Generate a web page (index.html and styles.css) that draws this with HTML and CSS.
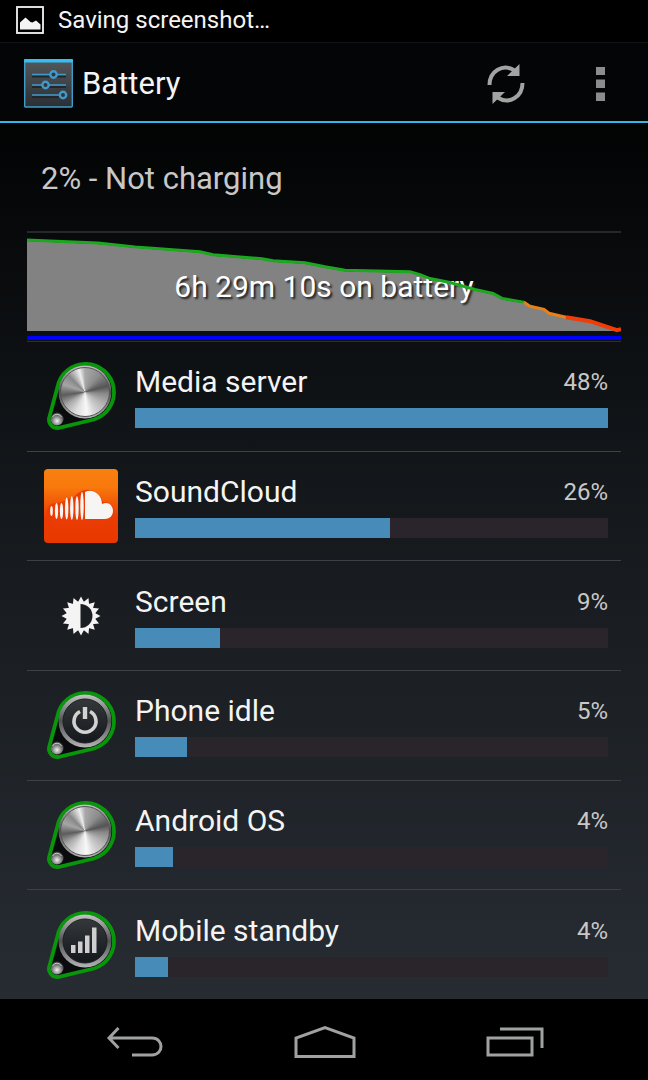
FILE: index.html
```html
<!DOCTYPE html>
<html lang="en">

<head>
    <meta charset="UTF-8">
    <meta name="viewport" content="width=device-width, initial-scale=1.0">
    <title>Battery</title>
    <link rel="stylesheet" href="styles.css">
</head>

<body>
    <!-- shared shapes for the round icons -->
    <svg class="defs" width="0" height="0" aria-hidden="true">
        <defs>
            <linearGradient id="ring" x1="0" y1="0" x2="0" y2="1">
                <stop offset="0" stop-color="#c4c4c4" />
                <stop offset="0.5" stop-color="#505254" />
                <stop offset="1" stop-color="#b4b4b4" />
            </linearGradient>
            <linearGradient id="face" x1="0" y1="0" x2="0" y2="1">
                <stop offset="0" stop-color="#35383b" />
                <stop offset="1" stop-color="#14171b" />
            </linearGradient>
            <radialGradient id="stud" cx="0.5" cy="0.65" r="0.6">
                <stop offset="0" stop-color="#f2f2f2" />
                <stop offset="0.5" stop-color="#929292" />
                <stop offset="1" stop-color="#3c3c3c" />
            </radialGradient>
            <linearGradient id="tile" x1="0" y1="0" x2="0" y2="1">
                <stop offset="0" stop-color="#f9800e" />
                <stop offset="0.25" stop-color="#f8780c" />
                <stop offset="0.65" stop-color="#ea3c04" />
                <stop offset="1" stop-color="#e83800" />
            </linearGradient>
            <linearGradient id="panel" x1="0" y1="0" x2="0" y2="1">
                <stop offset="0" stop-color="#55585a" />
                <stop offset="1" stop-color="#292f35" />
            </linearGradient>
            <symbol id="case" viewBox="0 0 74 74">
                <path d="M13.5 28A28.500 28.500 0 1 1 50 60.5L14 69A8.5 8.5 0 0 1 5 59.5Z" fill="#090b0c" stroke="#08960b" stroke-width="3.800" />
                <circle cx="41" cy="33" r="26.500" fill="url(#ring)" />
                <circle cx="13" cy="60" r="6.500" fill="url(#stud)" />
                <path d="M8.500 58a5 5 0 0 1 9 0" fill="none" stroke="#ccc" stroke-width="1" />
            </symbol>
        </defs>
    </svg>

    <div class="status-bar">
        <svg class="status-icon" viewBox="0 0 28 28" aria-hidden="true">
            <rect x="1" y="1" width="26" height="26" fill="none" stroke="#f4f4f4" stroke-width="1.8" />
            <path d="M4 23.500v-7l5.500-5 5 4.500 2 .5 3.500-2 4.500 4v5z" fill="#f4f4f4" />
        </svg>
        <span>Saving screenshot…</span>
    </div>

    <header class="action-bar">
        <svg class="settings-icon" viewBox="0 0 49 49" aria-hidden="true">
            <rect x="0.7" y="1" width="47.600" height="47" rx="1" fill="url(#panel)" stroke="#3f9cca" stroke-width="1.4" />
            <rect x="0" y="0" width="49" height="3.500" rx="1" fill="#38bdf0" />
            <path d="M8 17.500h34M8 28h34M8 38h34" stroke="#22272b" stroke-width="2" />
            <path d="M8 15.500h18M33 15.500h9M8 26h10M25 26h17M8 36h27" stroke="#4399c9" stroke-width="1.700" />
            <g fill="#30373c" stroke="#4399c9" stroke-width="2.400">
                <circle cx="29.500" cy="15.500" r="3.200" />
                <circle cx="21.500" cy="26" r="3.200" />
                <circle cx="39" cy="36" r="3.200" />
            </g>
        </svg>
        <h1 class="title">Battery</h1>
        <button class="action" type="button" aria-label="Refresh">
            <svg width="40" height="42" viewBox="0 0 40 42" fill="none" stroke="#a3a3a3" stroke-width="4">
                <path d="M3.500 22C3.500 8 17 0 28.500 7.500" />
                <path d="M36.500 20C36.500 34 23 42 11.500 34.500" />
                <path d="M33.500 1v12H21z M6.500 41V29H19z" fill="#a3a3a3" stroke="none" />
            </svg>
        </button>
        <button class="action" type="button" aria-label="More options">
            <svg width="9" height="34" viewBox="0 0 9 34" fill="#8c8c8c">
                <path d="M0 0h9v8H0zM0 12.500h9v8.500H0zM0 25.500h9v8.500H0z" />
            </svg>
        </button>
    </header>

    <main class="content">
        <p class="summary">2% - Not charging</p>

        <div class="chart">
            <svg class="layer" viewBox="0 0 594 109" preserveAspectRatio="none" aria-hidden="true">
                <path fill="#828282" d="M0 8L23 9 71 11 108 15 173 20 186 23 235 27 246 29 278 31 298 35 318 38.500 383 40 393 43 403 47 423 51 448 58 466 62 475 67 498 71 503 74 517 77 522 81 539 85 563 89 590 98V99H0z" />
                <path fill="#0000ff" d="M0 104h594v4H0z" />
            </svg>
            <p class="chart-label">6h 29m 10s on battery</p>
            <svg class="layer" viewBox="0 0 594 109" preserveAspectRatio="none" fill="none" stroke-width="3" aria-hidden="true">
                <path stroke="#1ca81f" d="M0 7L23 8 71 10 108 14 173 19 186 22 235 26 246 28 278 30 298 34 318 37.500 383 39 393 42 403 46 423 50 448 57 466 61 475 66 498 70" />
                <path stroke="#e8801a" d="M497 70l6 4 14 3 5 4 17 4" />
                <path stroke="#f03c06" stroke-width="4" d="M539 85l24 4 27 9 4-1" />
            </svg>
        </div>

        <ul class="usage">
            <li class="item">
                <svg class="icon" viewBox="0 0 74 74" aria-hidden="true">
                    <use href="#case" />
                    <foreignObject x="16" y="8" width="50" height="50">
                        <div class="disc"></div>
                    </foreignObject>
                </svg>
                <div class="info">
                    <span class="name">Media server</span>
                    <span class="percent">48%</span>
                    <div class="bar"><div class="fill" style="width: 100%"></div></div>
                </div>
            </li>
            <li class="item">
                <svg class="icon" viewBox="0 0 74 74" aria-hidden="true">
                    <rect width="74" height="74" rx="4" fill="url(#tile)" />
                    <path d="M3 43c0-6 4-9 10-9 6 0 11-5 17-6 7-9 22-12 29 5 10 0 12 8 11 12-1 8-8 10-12 10H12c-6 0-9-5-9-12z" fill="#ea3d05" />
                    <path d="M41 50V23c8-4 17 3 17 12 7-3 11 2 11 7s-4 8-8 8z" fill="#f7f5f3" />
                    <g fill="#f7f5f3">
                        <ellipse cx="7.500" cy="42" rx="1.300" ry="5" />
                        <ellipse cx="12.500" cy="42" rx="1.600" ry="8" />
                        <ellipse cx="17.500" cy="42" rx="1.600" ry="8" />
                        <ellipse cx="22.700" cy="39.500" rx="1.700" ry="11" />
                        <ellipse cx="27.800" cy="39" rx="1.700" ry="12" />
                        <ellipse cx="33" cy="39" rx="1.700" ry="12" />
                        <ellipse cx="38" cy="37" rx="1.700" ry="14" />
                    </g>
                </svg>
                <div class="info">
                    <span class="name">SoundCloud</span>
                    <span class="percent">26%</span>
                    <div class="bar"><div class="fill" style="width: 54%"></div></div>
                </div>
            </li>
            <li class="item">
                <svg class="icon" viewBox="0 0 74 74" aria-hidden="true">
                    <g transform="translate(37 37)" fill="#f4f4f4">
                        <circle r="14.500" />
                        <path id="ray" d="M-3.500-13L0-19.500 3.500-13zM-3.500 13L0 19.500 3.500 13z" />
                        <use href="#ray" transform="rotate(22.5)" />
                        <use href="#ray" transform="rotate(45)" />
                        <use href="#ray" transform="rotate(67.5)" />
                        <use href="#ray" transform="rotate(90)" />
                        <use href="#ray" transform="rotate(112.5)" />
                        <use href="#ray" transform="rotate(135)" />
                        <use href="#ray" transform="rotate(157.5)" />
                        <path d="M-.5-12A12 12 0 0 1-.5 12z" fill="#1a1e22" />
                    </g>
                </svg>
                <div class="info">
                    <span class="name">Screen</span>
                    <span class="percent">9%</span>
                    <div class="bar"><div class="fill" style="width: 18%"></div></div>
                </div>
            </li>
            <li class="item">
                <svg class="icon" viewBox="0 0 74 74" aria-hidden="true">
                    <use href="#case" />
                    <circle cx="41" cy="33" r="22" fill="url(#face)" stroke="#1b1e21" stroke-width="1" />
                    <path d="M36 23.500a11 11 0 1 0 10 0" fill="none" stroke="#d2d2d2" stroke-width="3.600" />
                    <path d="M41 19v12" stroke="#d2d2d2" stroke-width="4.400" />
                </svg>
                <div class="info">
                    <span class="name">Phone idle</span>
                    <span class="percent">5%</span>
                    <div class="bar"><div class="fill" style="width: 11%"></div></div>
                </div>
            </li>
            <li class="item">
                <svg class="icon" viewBox="0 0 74 74" aria-hidden="true">
                    <use href="#case" />
                    <foreignObject x="16" y="8" width="50" height="50">
                        <div class="disc"></div>
                    </foreignObject>
                </svg>
                <div class="info">
                    <span class="name">Android OS</span>
                    <span class="percent">4%</span>
                    <div class="bar"><div class="fill" style="width: 8%"></div></div>
                </div>
            </li>
            <li class="item">
                <svg class="icon" viewBox="0 0 74 74" aria-hidden="true">
                    <use href="#case" />
                    <circle cx="41" cy="33" r="22" fill="url(#face)" stroke="#1b1e21" stroke-width="1" />
                    <path d="M27 45v-8h4.500v8zM34 45V33.500h4.500V45zM41 45V27.500h4.500V45zM48 45V19.500h4.500V45z" fill="#cfcfcf" />
                </svg>
                <div class="info">
                    <span class="name">Mobile standby</span>
                    <span class="percent">4%</span>
                    <div class="bar"><div class="fill" style="width: 7%"></div></div>
                </div>
            </li>
        </ul>
    </main>

    <nav class="nav-bar">
        <button class="nav-button" type="button" aria-label="Back">
            <svg width="58" height="32" viewBox="0 0 58 32" fill="none" stroke="#a0a2a2" stroke-width="3">
                <path d="M2.500 12H46c12 0 12 17 0 17H26M12.500 2L3 12l9.500 10" />
            </svg>
        </button>
        <button class="nav-button" type="button" aria-label="Home">
            <svg width="62" height="34" viewBox="0 0 62 34" fill="none" stroke="#a0a2a2" stroke-width="3">
                <path d="M2 31.500V13L31 2.500 60 13v18.500z" />
            </svg>
        </button>
        <button class="nav-button" type="button" aria-label="Recent apps">
            <svg width="58" height="32" viewBox="0 0 58 32" fill="none" stroke="#a0a2a2" stroke-width="3">
                <path d="M2 12h44v17H2zM14 3h42v19" />
            </svg>
        </button>
    </nav>
</body>

</html>
```
FILE: styles.css
```css
* {
    box-sizing: border-box;
}

body {
    margin: 0;
    min-height: 100vh;
    display: flex;
    flex-direction: column;
    background: #000;
    color: #f4f4f4;
    font-family: Roboto, sans-serif;
    font-size: 30px;
    line-height: 36px;
}

h1,
p,
ul {
    margin: 0;
    padding: 0;
}

button {
    padding: 0;
    border: 0;
    background: none;
    cursor: pointer;
}

svg {
    display: block;
    flex-shrink: 0;
}

.defs {
    position: absolute;
}

.status-bar {
    display: flex;
    align-items: center;
    gap: 14px;
    height: 42px;
    padding: 0 16px 2px;
    font-size: 24px;
}

.status-icon {
    width: 28px;
    height: 28px;
}

.action-bar {
    display: flex;
    align-items: center;
    height: 81px;
    padding: 3px 1px 0 24px;
    background: #040506;
    border-top: 1px solid #111415;
    border-bottom: 2px solid #35b5e5;
}

.settings-icon {
    width: 49px;
    height: 49px;
}

.title {
    flex: 1;
    padding-left: 9px;
    font-size: 31px;
    font-weight: 400;
}

.action {
    display: flex;
    align-items: center;
    justify-content: center;
    width: 94px;
    height: 74px;
}

.content {
    flex: 1;
    display: flex;
    flex-direction: column;
    padding: 0 27px;
    background: linear-gradient(#020303, #0f1215 30%, #191d21 55%, #272c33);
}

.summary {
    padding: 38px 14px 34px;
    font-size: 31px;
    color: #c8c8c8;
}

.chart {
    display: grid;
    align-items: center;
    height: 111px;
    border-top: 2px solid #25282c;
    border-bottom: 1px solid #2b3033;
}

.layer,
.chart-label {
    grid-area: 1 / 1;
}

.layer {
    width: 100%;
    height: 108px;
}

.chart-label {
    text-align: center;
    color: #fff;
    text-shadow: 2px 2px 2px #222;
}

.usage {
    flex: 1;
    display: flex;
    flex-direction: column;
    list-style: none;
}

.item {
    flex: 1;
    display: flex;
    align-items: center;
    gap: 17px;
    min-height: 100px;
    padding: 0 13px 0 17px;
    border-bottom: 1px solid #3d4144;
}

.item:last-child {
    border-bottom: 0;
}

.icon {
    width: 74px;
    height: 74px;
}

.disc {
    width: 50px;
    height: 50px;
    border-radius: 50%;
    border: 1px solid #555;
    background: conic-gradient(#a8a8a8, #8c8c8c 40deg, #555 75deg, #8a8a8a 95deg, #b5b5b5 125deg, #d0d0d0 150deg, #f8f8f8 175deg, #ddd 205deg, #aaa 235deg, #5c5c5c 262deg, #a5a5a5 290deg, #888 315deg, #eee 345deg, #a8a8a8);
}

.info {
    flex: 1;
    display: grid;
    grid-template-columns: 1fr auto;
    align-items: center;
    row-gap: 8px;
}

.percent {
    font-size: 24px;
    color: #c8c8c8;
}

.bar {
    grid-column: 1 / 3;
    height: 20px;
    background: #29252b;
}

.fill {
    height: 100%;
    background: #478bb8;
}

.nav-bar {
    display: flex;
    height: 81px;
    padding: 0 38px 0 40px;
    background: #000;
}

.nav-button {
    flex: 1;
    display: flex;
    align-items: center;
    justify-content: center;
    padding-top: 4px;
}
```
